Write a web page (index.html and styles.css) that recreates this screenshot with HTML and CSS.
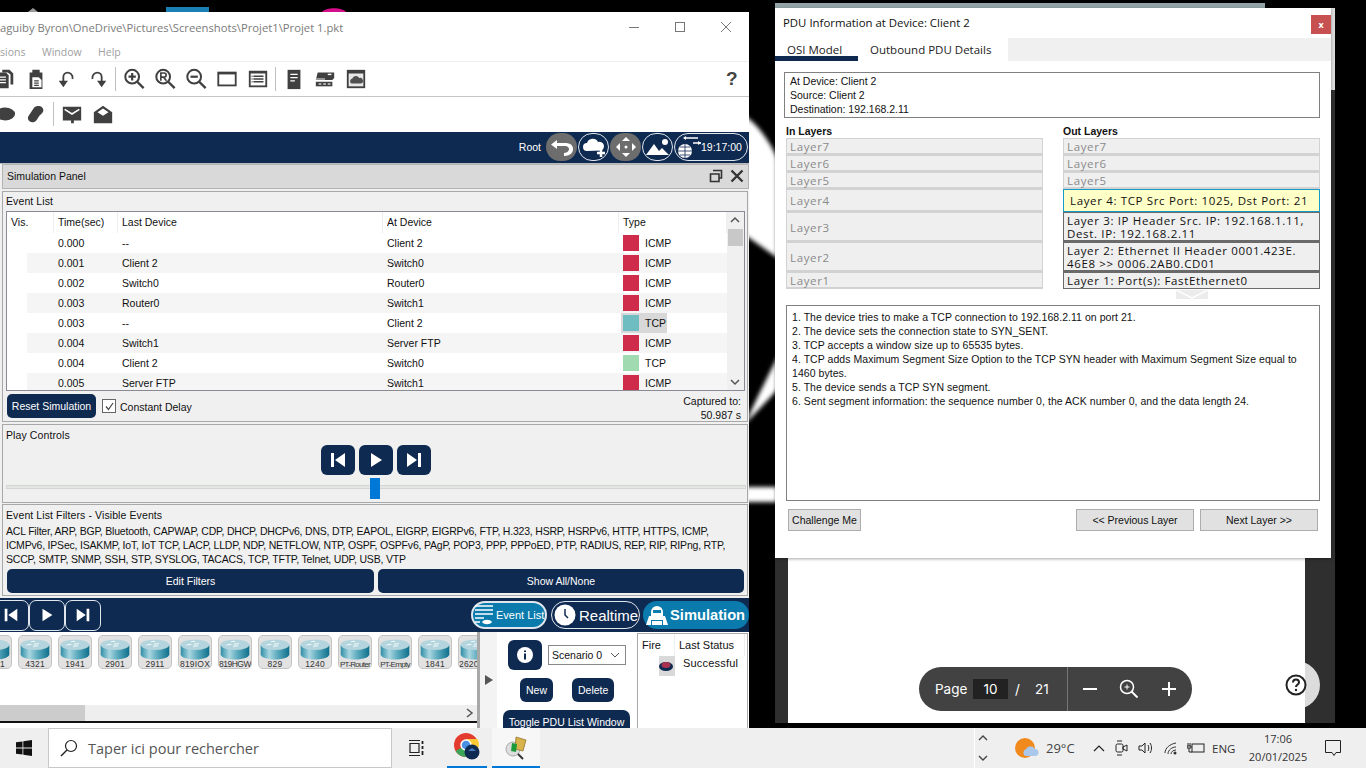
FILE: index.html
```html
<!DOCTYPE html>
<html lang="en">
<head>
<meta charset="utf-8">
<title>Packet Tracer - PDU Information</title>
<link rel="stylesheet" href="styles.css">
</head>
<body>
<svg class="defs" width="0" height="0" aria-hidden="true">
  <defs>
    <linearGradient id="rtSide" x1="0" x2="1" y1="0" y2="0">
      <stop offset="0" stop-color="#2f8ea6"/><stop offset=".3" stop-color="#a9d6e0"/><stop offset=".6" stop-color="#5ba9bd"/><stop offset="1" stop-color="#0f6f8c"/>
    </linearGradient>
    <filter id="soft"><feGaussianBlur stdDeviation="2.2"/></filter>
    <symbol id="router" viewBox="0 0 30 22">
      <path d="M0 6v10c0 3 6 5.500 15 5.500S30 19 30 16V6z" fill="url(#rtSide)"/>
      <ellipse cx="15" cy="6" rx="15" ry="5.500" fill="#b5d5de"/>
      <path d="M6 6.500c2-1.500 3 0 5-1M19 4.500c-2 1.500-3 0-5 1M13 8c2-1.500 3 0 5-1M11 3c2-1 2 0 4-.5" stroke="#fff" stroke-width="1" fill="none"/>
    </symbol>
    <symbol id="i-copy" viewBox="0 0 24 24"><path d="M3 5h10l3 3v14H3z" fill="#404040"/><path d="M6 10h7M6 13h7M6 16h7" stroke="#fff" stroke-width="1.500"/><path d="M9 2h8l4 4v12h-3V7l-3-2H9z" fill="#404040"/></symbol>
    <symbol id="i-paste" viewBox="0 0 24 24"><path d="M5 5h3V2h8v3h3v18H5z" fill="#404040"/><path d="M8 10h7l3 3v8H8z" fill="#fff"/><path d="M10 14h5M10 16.500h5M10 19h5" stroke="#404040" stroke-width="1.200"/></symbol>
    <symbol id="i-undo" viewBox="0 0 24 24"><path d="M18 12c1-5-3-7-5.500-7S8 7 8 10v6" fill="none" stroke="#404040" stroke-width="2"/><path d="M3 14h10l-5 7z" fill="#404040"/></symbol>
    <symbol id="i-redo" viewBox="0 0 24 24"><path d="M6 12C5 7 9 5 11.500 5S16 7 16 10v6" fill="none" stroke="#404040" stroke-width="2"/><path d="M11 14h10l-5 7z" fill="#404040"/></symbol>
    <symbol id="i-zin" viewBox="0 0 24 24"><circle cx="10" cy="9.500" r="7.500" fill="none" stroke="#404040" stroke-width="2.200"/><path d="M15.500 15l7 7" stroke="#404040" stroke-width="2.600"/><path d="M6 9.500h8M10 5.500v8" stroke="#404040" stroke-width="2.400"/></symbol>
    <symbol id="i-zre" viewBox="0 0 24 24"><circle cx="10" cy="9.500" r="7.500" fill="none" stroke="#404040" stroke-width="2.200"/><path d="M15.500 15l7 7" stroke="#404040" stroke-width="2.600"/><path d="M7.500 14V5.500h3.500a2 2 0 0 1 0 4.500H8M10.500 10l3 4" fill="none" stroke="#404040" stroke-width="1.800"/></symbol>
    <symbol id="i-zout" viewBox="0 0 24 24"><circle cx="10" cy="9.500" r="7.500" fill="none" stroke="#404040" stroke-width="2.200"/><path d="M15.500 15l7 7" stroke="#404040" stroke-width="2.600"/><path d="M6 9.500h8" stroke="#404040" stroke-width="2.400"/></symbol>
    <symbol id="i-win" viewBox="0 0 24 24"><rect x="2.500" y="5" width="19" height="14" fill="none" stroke="#404040" stroke-width="2"/><path d="M2 6h20" stroke="#404040" stroke-width="2"/></symbol>
    <symbol id="i-list" viewBox="0 0 24 24"><rect x="2" y="3" width="20" height="18" fill="#404040"/><rect x="4" y="6" width="16" height="13" fill="#fff"/><path d="M7 9h11M7 12h11M7 15h11" stroke="#404040" stroke-width="1.800"/><path d="M5 9h1M5 12h1M5 15h1" stroke="#404040" stroke-width="1.800"/></symbol>
    <symbol id="i-srv" viewBox="0 0 24 24"><rect x="5" y="2" width="14" height="21" fill="#404040"/><path d="M8 7h8M8 10.500h8M8 14h5" stroke="#fff" stroke-width="1.300"/></symbol>
    <symbol id="i-dev" viewBox="0 0 24 24"><path d="M4 5h18v6l-2 2H2z" fill="#404040"/><path d="M15 7h4" stroke="#fff" stroke-width="1.500"/><path d="M2 15h18v5H2z" fill="#404040"/><path d="M5 17.500h3M10 17.500h3M15 17.500h3" stroke="#ccc" stroke-width="1.500"/><path d="M2 12h10" stroke="#fff" stroke-width="1"/></symbol>
    <symbol id="i-cloud" viewBox="0 0 24 24"><rect x="2" y="2" width="20" height="20" fill="#404040"/><rect x="4" y="6" width="16" height="14" fill="#e8e8e8"/><path d="M7 17a3 3 0 0 1 1-5.500 4 4 0 0 1 7.500-.500 3 3 0 0 1 2 6z" fill="#505050"/></symbol>
    <symbol id="i-mail" viewBox="0 0 24 24"><path d="M2 4h20v15h-8v3h-3v-3H2z" fill="#404040"/><path d="M4 7l8 5 8-5" fill="none" stroke="#fff" stroke-width="1.800"/></symbol>
    <symbol id="i-mailo" viewBox="0 0 24 24"><path d="M2 10l10-7 10 7v12H2z" fill="#404040"/><path d="M6 10l6-4 6 4-6 4z" fill="#fff"/></symbol>
    <symbol id="i-first" viewBox="0 0 20 20"><path d="M3 3h3v14H3zM17 3v14L7 10z" fill="#fff"/></symbol>
    <symbol id="i-play" viewBox="0 0 20 20"><path d="M5 3l11 7-11 7z" fill="#fff"/></symbol>
    <symbol id="i-last" viewBox="0 0 20 20"><path d="M14 3h3v14h-3zM3 3v14l10-7z" fill="#fff"/></symbol>
  </defs>
</svg>

<main class="desk">
  <svg class="backdrop" viewBox="0 0 1366 728" width="1366" height="728" aria-hidden="true">
    <g fill="#fff" filter="url(#soft)">
      <path d="M745 116c12 8 24 24 34 45v98l-34-24z"/>
      <path d="M745 424c10-22 22-46 34-70v34l-34 36z"/>
      <rect x="745" y="487" width="34" height="15"/>
    </g>
    <rect x="166" y="7" width="43" height="6" fill="#1a7fb5"/>
    <path d="M322 12c4-5 20-5 24 0z" fill="#d60e8c"/>
    <path d="M28 12l5-4 5 4z" fill="#999"/>
    <rect x="775" y="3" width="490" height="6" fill="#94a3a8"/>
    <rect x="775" y="558" width="560" height="165" fill="#2f2f2f"/>
    <rect x="788" y="558" width="517" height="165" fill="#fff"/>
    <rect x="1331" y="90" width="4" height="470" fill="#2f2f2f"/>
    <rect x="1331" y="8" width="4" height="82" fill="#dcdcdc"/>
    <circle cx="1296" cy="685" r="24" fill="#dcdcdc"/>
    <rect x="1272" y="655" width="33" height="60" fill="#fff"/>
  </svg>

  <section class="pt-window">
    <header class="pt-title">
      <div class="title-row">
        <span class="title-text">aguiby Byron\OneDrive\Pictures\Screenshots\Projet1\Projet 1.pkt</span>
        <span class="win-ctrl">
          <svg width="12" height="12" viewBox="0 0 12 12"><path d="M1 6.500h10" stroke="#777" fill="none"/></svg>
          <svg width="12" height="12" viewBox="0 0 12 12"><rect x="1.500" y="1.500" width="9" height="9" stroke="#777" fill="none"/></svg>
          <svg width="12" height="12" viewBox="0 0 12 12"><path d="M1 1l10 10M11 1L1 11" stroke="#777" fill="none"/></svg>
        </span>
      </div>
      <nav class="menu"><span class="menu-a">sions</span><span class="menu-b">Window</span><span>Help</span></nav>
    </header>
    <div class="tool tool-one">
      <svg class="ico"><use href="#i-copy"/></svg><svg class="ico"><use href="#i-paste"/></svg>
      <svg class="ico"><use href="#i-undo"/></svg><svg class="ico"><use href="#i-redo"/></svg>
      <i class="sep"></i>
      <svg class="ico"><use href="#i-zin"/></svg><svg class="ico"><use href="#i-zre"/></svg><svg class="ico"><use href="#i-zout"/></svg>
      <svg class="ico"><use href="#i-win"/></svg><svg class="ico"><use href="#i-list"/></svg>
      <i class="sep"></i>
      <svg class="ico"><use href="#i-srv"/></svg><svg class="ico"><use href="#i-dev"/></svg><svg class="ico"><use href="#i-cloud"/></svg>
      <span class="help-q">?</span>
    </div>
    <div class="tool tool-two">
      <svg class="ico" viewBox="0 0 24 24"><ellipse cx="12" cy="12" rx="11" ry="7" fill="#404040"/></svg>
      <svg class="ico" viewBox="0 0 24 24"><path d="M8 21c-4 0-6-4-4-7l6-9c3-3 10-2 10 3 0 3-3 4-5 7s-3 6-7 6z" fill="#404040"/></svg>
      <i class="sep"></i>
      <svg class="ico"><use href="#i-mail"/></svg><svg class="ico"><use href="#i-mailo"/></svg>
    </div>
    <div class="navy-strip">
      <span class="root">Root</span>
      <span class="rnd rnd-grey"><svg width="24" height="20" viewBox="0 0 24 20"><path d="M7 3L1 7.500 7 12V9h8c3 0 4 2 4 3s-1 4-5 4v3c6 0 9-3 9-7s-3-6-8-6H7z" fill="#fff"/></svg></span>
      <span class="rnd rnd-line"><svg width="26" height="22" viewBox="0 0 26 22"><path d="M6 15a4 4 0 0 1 0-8 6 6 0 0 1 11-1 4.500 4.500 0 0 1 3 8.500z" fill="#fff"/><path d="M20 13v8M16 17h8" stroke="#fff" stroke-width="2.500"/></svg></span>
      <span class="rnd rnd-grey"><svg width="22" height="22" viewBox="0 0 22 22"><path d="M11 1l4 4H7zM11 21l-4-4h8zM1 11l4-4v8zM21 11l-4 4V7z" fill="#fff"/><circle cx="11" cy="11" r="1.500" fill="#fff"/></svg></span>
      <span class="rnd rnd-line"><svg width="26" height="22" viewBox="0 0 26 22"><path d="M1 19l8-11 5 7 3-3 7 7z" fill="#fff"/><circle cx="20" cy="6" r="3" fill="#fff"/></svg></span>
      <span class="rnd rnd-line rnd-time"><svg width="24" height="24" viewBox="0 0 24 24"><circle cx="8" cy="16" r="7" fill="#fff"/><path d="M1 16h14M8 9v14M3 12h10M3 20h10" stroke="#0f2a50" stroke-width=".8"/><path d="M9 3h12M16 8h8" stroke="#fff" stroke-width="1.500"/><path d="M9 1L6 3l3 2zM21 6l3 2-3 2z" fill="#fff"/></svg>19:17:00</span>
    </div>

    <div class="sim">
      <div class="sim-head">
        <span>Simulation Panel</span>
        <span class="sim-head-ico">
          <svg width="14" height="14" viewBox="0 0 14 14"><path d="M4 1.500h8.500V9H10M1.500 5H10v7.500H1.500z" fill="none" stroke="#333" stroke-width="1.600"/></svg>
          <svg width="14" height="14" viewBox="0 0 14 14"><path d="M1.500 1.500l11 11M12.500 1.500l-11 11" stroke="#333" stroke-width="2.400"/></svg>
        </span>
      </div>

      <div class="group group-events">
        <div class="group-title">Event List</div>
        <div class="table">
          <div class="rows">
            <div class="thead">
              <span>Vis.</span><span>Time(sec)</span><span>Last Device</span><span>At Device</span><span>Type</span>
            </div>
            <div class="tr"><span></span><span>0.000</span><span>--</span><span>Client 2</span><span class="type"><i class="sw red"></i>ICMP</span></div>
            <div class="tr alt"><span></span><span>0.001</span><span>Client 2</span><span>Switch0</span><span class="type"><i class="sw red"></i>ICMP</span></div>
            <div class="tr"><span></span><span>0.002</span><span>Switch0</span><span>Router0</span><span class="type"><i class="sw red"></i>ICMP</span></div>
            <div class="tr alt"><span></span><span>0.003</span><span>Router0</span><span>Switch1</span><span class="type"><i class="sw red"></i>ICMP</span></div>
            <div class="tr"><span></span><span>0.003</span><span>--</span><span>Client 2</span><span class="type type-sel"><i class="sw teal"></i>TCP</span></div>
            <div class="tr alt"><span></span><span>0.004</span><span>Switch1</span><span>Server FTP</span><span class="type"><i class="sw red"></i>ICMP</span></div>
            <div class="tr"><span></span><span>0.004</span><span>Client 2</span><span>Switch0</span><span class="type"><i class="sw green"></i>TCP</span></div>
            <div class="tr alt"><span></span><span>0.005</span><span>Server FTP</span><span>Switch1</span><span class="type"><i class="sw red"></i>ICMP</span></div>
          </div>
          <div class="vbar">
            <svg width="16" height="16" viewBox="0 0 16 16"><path d="M4 10l4-4 4 4" fill="none" stroke="#555" stroke-width="1.500"/></svg>
            <i class="vthumb"></i>
            <svg width="16" height="16" viewBox="0 0 16 16"><path d="M4 6l4 4 4-4" fill="none" stroke="#555" stroke-width="1.500"/></svg>
          </div>
        </div>
        <div class="ev-foot">
          <button class="btn reset">Reset Simulation</button>
          <span class="check"><svg width="13" height="13" viewBox="0 0 13 13"><path d="M3 6.500l2.500 3L10 3" fill="none" stroke="#444" stroke-width="1.200"/></svg></span>
          <span class="delay">Constant Delay</span>
          <span class="captured">Captured to:<br>50.987 s</span>
        </div>
      </div>

      <div class="group group-play">
        <div class="group-title">Play Controls</div>
        <div class="play-btns">
          <button class="btn play"><svg width="20" height="20"><use href="#i-first"/></svg></button>
          <button class="btn play"><svg width="20" height="20"><use href="#i-play"/></svg></button>
          <button class="btn play"><svg width="20" height="20"><use href="#i-last"/></svg></button>
        </div>
        <div class="slider"></div>
        <i class="thumb"></i>
      </div>

      <div class="group group-filter">
        <div class="group-title">Event List Filters - Visible Events</div>
        <p class="filters">ACL Filter, ARP, BGP, Bluetooth, CAPWAP, CDP, DHCP, DHCPv6, DNS, DTP, EAPOL, EIGRP, EIGRPv6, FTP, H.323, HSRP, HSRPv6, HTTP, HTTPS, ICMP,<br>ICMPv6, IPSec, ISAKMP, IoT, IoT TCP, LACP, LLDP, NDP, NETFLOW, NTP, OSPF, OSPFv6, PAgP, POP3, PPP, PPPoED, PTP, RADIUS, REP, RIP, RIPng, RTP,<br>SCCP, SMTP, SNMP, SSH, STP, SYSLOG, TACACS, TCP, TFTP, Telnet, UDP, USB, VTP</p>
        <div class="filter-btns">
          <button class="btn wide">Edit Filters</button>
          <button class="btn wide">Show All/None</button>
        </div>
      </div>
    </div>

    <div class="navy-bar">
      <div class="nav-btns">
        <button class="nav"><svg width="18" height="18"><use href="#i-first"/></svg></button>
        <button class="nav"><svg width="18" height="18"><use href="#i-play"/></svg></button>
        <button class="nav"><svg width="18" height="18"><use href="#i-last"/></svg></button>
      </div>
      <div class="modes">
        <span class="mode mode-ev"><svg width="20" height="22" viewBox="0 0 20 22"><path d="M1 2h18M1 6h18M1 10h18M1 14h9M1 18h5" stroke="#fff" stroke-width="1.500"/><path d="M8 18c2-3 8-3 10 0-2 3-8 3-10 0z" fill="#fff"/></svg>Event List</span>
        <span class="mode mode-rt"><svg width="22" height="22" viewBox="0 0 22 22"><circle cx="11" cy="11" r="10.500" fill="#fff"/><path d="M11 5v6l3 3" fill="none" stroke="#0f2a50" stroke-width="1.500"/></svg>Realtime</span>
        <span class="mode mode-sim"><svg width="24" height="24" viewBox="0 0 24 24"><path d="M6 9a6 6 0 0 1 12 0v8H6z" fill="#fff"/><rect x="8" y="7" width="8" height="3" fill="#0a7bac"/><path d="M1 22l3-9h2v9zM23 22l-3-9h-2v9zM7 18h10v4H7z" fill="#fff"/></svg>Simulation</span>
      </div>
    </div>

    <div class="lower">
      <div class="devices">
        <div class="tiles">
          <figure class="tile"><svg class="rt"><use href="#router"/></svg><figcaption>4331</figcaption></figure>
          <figure class="tile"><svg class="rt"><use href="#router"/></svg><figcaption>4321</figcaption></figure>
          <figure class="tile"><svg class="rt"><use href="#router"/></svg><figcaption>1941</figcaption></figure>
          <figure class="tile"><svg class="rt"><use href="#router"/></svg><figcaption>2901</figcaption></figure>
          <figure class="tile"><svg class="rt"><use href="#router"/></svg><figcaption>2911</figcaption></figure>
          <figure class="tile"><svg class="rt"><use href="#router"/></svg><figcaption>819IOX</figcaption></figure>
          <figure class="tile"><svg class="rt"><use href="#router"/></svg><figcaption class="tight">819HGW</figcaption></figure>
          <figure class="tile"><svg class="rt"><use href="#router"/></svg><figcaption>829</figcaption></figure>
          <figure class="tile"><svg class="rt"><use href="#router"/></svg><figcaption>1240</figcaption></figure>
          <figure class="tile"><svg class="rt"><use href="#router"/></svg><figcaption class="tighter">PT-Router</figcaption></figure>
          <figure class="tile"><svg class="rt"><use href="#router"/></svg><figcaption class="tighter">PT-Empty</figcaption></figure>
          <figure class="tile"><svg class="rt"><use href="#router"/></svg><figcaption>1841</figcaption></figure>
          <figure class="tile"><svg class="rt"><use href="#router"/></svg><figcaption>2620XM</figcaption></figure>
        </div>
        <div class="hbar"><i class="hthumb"></i><svg width="10" height="12" viewBox="0 0 10 12"><path d="M2 2l5 4-5 4" fill="none" stroke="#555" stroke-width="1.500"/></svg></div>
      </div>
      <div class="grip"><svg width="8" height="10" viewBox="0 0 8 10"><path d="M0 0l8 5-8 5z" fill="#555"/></svg></div>
      <div class="scenario">
        <div class="sc-row">
          <button class="btn info"><svg width="18" height="18" viewBox="0 0 18 18"><circle cx="9" cy="9" r="8" fill="#fff"/><path d="M9 7.500v6M9 4.500v1.500" stroke="#0f2a50" stroke-width="2"/></svg></button>
          <span class="select">Scenario 0<svg width="10" height="6" viewBox="0 0 10 6"><path d="M1 1l4 4 4-4" fill="none" stroke="#555"/></svg></span>
        </div>
        <div class="sc-btns"><button class="btn small">New</button><button class="btn small">Delete</button></div>
        <button class="btn toggle">Toggle PDU List Window</button>
      </div>
      <div class="fire">
        <div class="fire-head"><span>Fire</span><span>Last Status</span></div>
        <div class="fire-row">
          <span class="fire-dot"><svg width="14" height="10" viewBox="0 0 14 10"><ellipse cx="7" cy="5.500" rx="7" ry="4.500" fill="#0f2a50"/><ellipse cx="7" cy="4" rx="4.500" ry="3" fill="#a8324f"/></svg></span>
          <span>Successful</span>
        </div>
      </div>
    </div>
  </section>

  <section class="pdu">
    <header class="pdu-title"><span>PDU Information at Device: Client 2</span><button class="close">x</button></header>
    <div class="tabs"><span class="tab tab-on">OSI Model</span><span class="tab tab-off">Outbound PDU Details</span><span class="tab-fill"></span></div>
    <div class="pdu-body">
      <div class="at-box">At Device: Client 2<br>Source: Client 2<br>Destination: 192.168.2.11</div>
      <div class="cols">
        <div class="col">
          <h2>In Layers</h2>
          <div class="ly h17">Layer7</div><div class="ly h17">Layer6</div><div class="ly h17">Layer5</div>
          <div class="ly h23">Layer4</div><div class="ly h30">Layer3</div><div class="ly h30">Layer2</div><div class="ly h17">Layer1</div>
        </div>
        <div class="col">
          <h2>Out Layers</h2>
          <div class="ly h17">Layer7</div><div class="ly h17">Layer6</div><div class="ly h17">Layer5</div>
          <div class="ly h23 ly-sel">Layer 4: TCP Src Port: 1025, Dst Port: 21</div>
          <div class="ly h30 ly-on">Layer 3: IP Header Src. IP: 192.168.1.11,<br>Dest. IP: 192.168.2.11</div>
          <div class="ly h30 ly-on">Layer 2: Ethernet II Header 0001.423E.<br>46E8 &gt;&gt; 0006.2AB0.CD01</div>
          <div class="ly h17 ly-on ly-last">Layer 1: Port(s): FastEthernet0</div>
          <svg class="down" width="32" height="9" viewBox="0 0 32 9"><rect width="32" height="9" fill="#ececec"/><path d="M0 0l16 8 16-8" fill="none" stroke="#fff" stroke-width="1.500"/></svg>
        </div>
      </div>
      <div class="desc">1. The device tries to make a TCP connection to 192.168.2.11 on port 21.<br>2. The device sets the connection state to SYN_SENT.<br>3. TCP accepts a window size up to 65535 bytes.<br>4. TCP adds Maximum Segment Size Option to the TCP SYN header with Maximum Segment Size equal to<br>1460 bytes.<br>5. The device sends a TCP SYN segment.<br>6. Sent segment information: the sequence number 0, the ACK number 0, and the data length 24.</div>
      <div class="pdu-foot">
        <button class="gbtn">Challenge Me</button>
        <span class="foot-right"><button class="gbtn gwide">&lt;&lt; Previous Layer</button><button class="gbtn gwide">Next Layer &gt;&gt;</button></span>
      </div>
    </div>
  </section>

  <div class="pager">
    <span class="pg-label">Page</span><span class="pg-num">10</span><span class="pg-slash">/</span><span class="pg-total">21</span>
    <i class="pg-sep"></i>
    <svg width="16" height="16" viewBox="0 0 16 16"><path d="M1 8h14" stroke="#fff" stroke-width="2"/></svg>
    <svg width="20" height="20" viewBox="0 0 20 20"><circle cx="8" cy="8" r="6.500" fill="none" stroke="#fff" stroke-width="1.500"/><path d="M12.500 12.500l6 6" stroke="#fff" stroke-width="2"/><path d="M5.500 8h5M8 5.500v5" stroke="#fff"/></svg>
    <svg width="16" height="16" viewBox="0 0 16 16"><path d="M1 8h14M8 1v14" stroke="#fff" stroke-width="2"/></svg>
  </div>
  <svg class="pdf-help" width="22" height="22" viewBox="0 0 22 22"><circle cx="11" cy="11" r="9.500" fill="#fff" stroke="#222" stroke-width="2"/><path d="M8 8.500c0-4 6-4 6 0 0 2-3 2-3 4.500" fill="none" stroke="#222" stroke-width="2"/><circle cx="11" cy="16" r="1.200" fill="#222"/></svg>
</main>

<footer class="taskbar">
  <svg class="tb-start" width="16" height="16" viewBox="0 0 16 16"><path d="M0 2.300l6.500-.9v6.200H0zM7.300 1.300L16 0v7.600H7.300zM0 8.400h6.500v6.200L0 13.700zM7.300 8.400H16V16l-8.700-1.200z" fill="#111"/></svg>
  <div class="tb-search">
    <svg width="18" height="18" viewBox="0 0 18 18"><circle cx="11" cy="7" r="5.500" fill="none" stroke="#222" stroke-width="1.200"/><path d="M7 11l-6 6" stroke="#222" stroke-width="1.500"/></svg>
    <span>Taper ici pour rechercher</span>
  </div>
  <span class="tb-task"><svg width="16" height="16" viewBox="0 0 16 16"><path d="M1 .5h11M1 15.500h11M2 3.500h9v9H2z" fill="none" stroke="#222" stroke-width="1.200"/><path d="M14.500 1v3M14.500 6v3M14.500 11v4" stroke="#222" stroke-width="1.800"/></svg></span>
  <span class="tb-app">
    <svg width="26" height="28" viewBox="0 0 26 28"><circle cx="12" cy="12" r="12" fill="#e33b2e"/><path d="M12 12L1.600 18A12 12 0 0 0 18 22.400z" fill="#3aa757"/><path d="M12 12l6 10.400A12 12 0 0 0 23.500 6H12z" fill="#fcc934"/><circle cx="12" cy="12" r="5" fill="#4a90e2" stroke="#fff" stroke-width="1.500"/><circle cx="18" cy="19" r="7.500" fill="#0f2a50"/><path d="M14 18l4-3 4 3z" fill="#4a7cc0"/></svg>
  </span>
  <span class="tb-app tb-app-on">
    <svg width="26" height="26" viewBox="0 0 26 26"><circle cx="10" cy="15" r="7" fill="#ddd" stroke="#aaa"/><path d="M13 3l10 3-3 11-8-2z" fill="#d8b24a" stroke="#8a6a20" stroke-width=".7"/><path d="M9 9l5 1-1 8-5-1z" fill="#1c9a3a"/><path d="M15 20l5 5" stroke="#333" stroke-width="2"/></svg>
  </span>
  <span class="tb-fill"></span>
  <span class="tb-scroll">
    <svg width="10" height="6" viewBox="0 0 10 6"><path d="M1 5l4-4 4 4" fill="none" stroke="#444" stroke-width="1.400"/></svg>
    <svg width="10" height="6" viewBox="0 0 10 6"><path d="M1 1l4 4 4-4" fill="none" stroke="#444" stroke-width="1.400"/></svg>
  </span>
  <svg class="tb-wx" width="24" height="22" viewBox="0 0 24 22"><circle cx="10" cy="11" r="10" fill="#f08a1d"/><path d="M10 19a4 4 0 0 1 1-7 5 5 0 0 1 9 0 3.500 3.500 0 0 1 0 7z" fill="#a9c8ec"/></svg>
  <span class="tb-temp">29°C</span>
  <span class="tray">
    <svg width="12" height="7" viewBox="0 0 12 7"><path d="M1 6l5-5 5 5" fill="none" stroke="#222" stroke-width="1.200"/></svg>
    <svg width="14" height="16" viewBox="0 0 14 16"><rect x="1" y="4" width="7" height="8" rx="1.500" fill="none" stroke="#222"/><path d="M8 7l4-2v6l-4-2zM2 1h5M2 15h5" fill="none" stroke="#222"/></svg>
    <svg width="16" height="14" viewBox="0 0 16 14"><path d="M1 5h3l3-3v10L4 9H1zM10 4c1 2 1 4 0 6M12 2c2 3 2 7 0 10" fill="none" stroke="#222"/></svg>
    <svg width="14" height="14" viewBox="0 0 14 14"><path d="M1 12C1 7 6 3 12 2M4 13c0-4 4-7 8-7M7 13c0-2 2-4 5-4" fill="none" stroke="#333"/><circle cx="11" cy="12" r="1.500" fill="#333"/></svg>
    <svg width="18" height="12" viewBox="0 0 18 12"><rect x="5" y="2" width="12" height="8" fill="none" stroke="#222"/><path d="M3 1v3M1 1v3M0 4h4v2H0zM2 6v4h3" fill="none" stroke="#222"/></svg>
  </span>
  <span class="tb-lang">ENG</span>
  <span class="tb-clock">17:06<br>20/01/2025</span>
  <svg class="tb-note" width="16" height="16" viewBox="0 0 16 16"><path d="M.5.500h15v12H11L9 15.500l-2-3H.5z" fill="none" stroke="#222"/></svg>
</footer>
</body>
</html>
```

FILE: styles.css
```css
* { box-sizing: border-box; }
html, body { margin: 0; padding: 0; }
body { width: 1366px; height: 768px; overflow: hidden; background: #000; font-family: "Liberation Sans", Arial, sans-serif; font-size: 10.5px; color: #111; }
.defs { position: absolute; }
button { font-family: inherit; cursor: default; }
p, h2, figure { margin: 0; }
svg { display: block; flex: none; }

.desk { position: relative; width: 1366px; height: 728px; overflow: hidden; background: #000; }
.backdrop { position: absolute; left: 0; top: 0; }

/* Packet Tracer window */
.pt-window { position: absolute; left: 0; top: 12px; width: 749px; height: 716px; background: #fff; overflow: hidden; display: flex; flex-direction: column; }
.pt-title { height: 50px; border-bottom: 1px solid #eee; flex: none; }
.title-row { height: 30px; display: flex; align-items: center; justify-content: space-between; }
.title-text { font-family: "Open Sans", sans-serif; font-size: 11.25px; color: #7b7b7b; white-space: nowrap; }
.win-ctrl { display: flex; gap: 34px; padding-right: 17px; }
.menu { display: flex; height: 20px; align-items: center; font-family: "Open Sans", sans-serif; font-size: 10.5px; color: #a0a0a0; }
.menu-a { width: 42px; }
.menu-b { width: 56px; }
.tool { display: flex; align-items: center; height: 35px; flex: none; margin-left: -11px; }
.tool-one { border-bottom: 1px solid #c4c4c4; padding-bottom: 1px; }
.tool-two { height: 35px; padding-bottom: 2px; }
.ico { width: 22px; height: 22px; margin: 0 4.500px; }
.sep { width: 1px; height: 24px; background: #c0c0c0; margin: 0 2px; }
.help-q { margin-left: auto; width: 23px; font-weight: bold; font-size: 19px; color: #444; }
.navy-strip { height: 31px; background: #0f2a50; display: flex; align-items: center; justify-content: flex-end; flex: none; gap: 1px; padding: 0 1px 1px 0; color: #fff; font-size: 10.5px; }
.root { margin-right: 4px; }
.rnd { width: 31px; height: 28px; border-radius: 14px; display: flex; align-items: center; justify-content: center; }
.rnd-grey { background: #6d6d6d; }
.rnd-line { border: 1px solid #dfe6ee; }
.rnd-time { width: 74px; justify-content: flex-start; gap: 0; font-size: 10.5px; padding-left: 2px; }

.sim { height: 435px; background: #f0f0f0; padding-left: 2px; border-top: 1px solid #bbb; flex: none; display: flex; flex-direction: column; }
.sim-head { height: 25px; background: #d9d9d9; border: 1px solid #b4b4b4; display: flex; align-items: center; justify-content: space-between; padding: 0 4px 2px; flex: none; font-size: 10.5px; }
.sim-head-ico { display: flex; gap: 7px; }
.group { position: relative; width: 746px; border: 1px solid #a8a8a8; flex: none; display: flex; flex-direction: column; }
.group-events { height: 231px; margin-top: 2px; }
.group-play { height: 79px; margin-top: 2px; }
.group-filter { height: 92px; margin-top: 1px; }
.group-title { height: 19px; line-height: 19px; padding-left: 3px; flex: none; letter-spacing: .1px; }
.group-play .group-title, .group-filter .group-title { line-height: 21px; }

.table { margin-left: 3px; width: 739px; height: 180px; border: 1px solid #8a8a96; background: #fff; display: flex; flex: none; overflow: hidden; }
.rows { width: 720px; flex: none; }
.thead, .tr { display: grid; grid-template-columns: 47px 64px 265px 236px 108px; height: 20px; align-items: center; }
.thead { height: 21px; }
.thead span { height: 21px; line-height: 21px; padding-left: 4px; border-right: 1px solid #eee; }
.tr span { padding-left: 4px; }
.tr span:first-child { padding: 0; }
.tr.alt { background: linear-gradient(to right, #fff 20px, #f5f5f5 20px); }
.type { display: flex; align-items: center; height: 20px; }
.tr .type { padding-left: 4px; }
.type-sel { background: linear-gradient(to right, #d8d8d8 0, #d8d8d8 46px, transparent 46px); margin-left: 2px; padding-left: 2px !important; }
.sw { width: 16px; height: 16px; margin-right: 6px; flex: none; }
.red { background: #cf2c4b; }
.teal { background: #6fbcc1; }
.green { background: #9fdab1; }
.vbar { flex: 1; background: #f0f0f0; display: flex; flex-direction: column; justify-content: space-between; position: relative; }
.vthumb { position: absolute; left: 1px; top: 17px; width: 15px; height: 17px; background: #c8c8c8; }
.ev-foot { flex: 1; display: flex; align-items: flex-start; padding: 3px 6px 0 4px; }
.btn { background: #0f2a50; color: #fff; border: 0; border-radius: 5px; font-size: 10.5px; padding: 0; }
.reset { width: 89px; height: 24px; }
.check { width: 14px; height: 14px; border: 1px solid #666; margin: 5px 4px 0 6px; background: #fff; }
.delay { margin-top: 6px; line-height: 14px; }
.captured { margin-left: auto; text-align: right; line-height: 14px; }
.play-btns { display: flex; justify-content: center; gap: 4px; padding-left: 2px; margin-top: 1px; }
.btn.play { width: 34px; height: 30px; border-radius: 6px; display: flex; align-items: center; justify-content: center; }
.slider { height: 4px; margin: 10px 1px 0 3px; background: #e4e6e4; border: 1px solid #d4d6d4; }
.thumb { position: absolute; left: 367px; top: 53px; width: 10px; height: 21px; background: #0078d7; }
.filters { padding-left: 3px; line-height: 14px; height: 42px; letter-spacing: -.2px; white-space: nowrap; }
.filter-btns { display: flex; gap: 4px; padding-left: 4px; margin-top: 3px; }
.btn.wide { width: 367px; height: 24px; }
.filter-btns .btn.wide + .btn.wide { width: 366px; }

.navy-bar { height: 34px; background: #0f2a50; display: flex; justify-content: space-between; align-items: center; flex: none; }
.nav-btns { display: flex; margin-left: -7px; gap: 0; }
.nav { width: 36px; height: 31px; background: transparent; border: 1px solid #dfe6ee; border-radius: 7px; display: flex; align-items: center; justify-content: center; padding: 0; }
.modes { display: flex; align-items: center; gap: 3px; }
.mode { height: 28px; border-radius: 14px; display: flex; align-items: center; color: #fff; border: 1px solid #dfe6ee; white-space: nowrap; }
.mode-ev { width: 76px; background: #0a7bac; font-size: 11px; gap: 2px; padding-left: 1px; border-width: 2px; }
.mode-rt { width: 89px; font-size: 15px; gap: 3px; padding-left: 2px; margin-left: 1px; }
.mode-sim { width: 106px; background: #0a7bac; font-size: 14.700px; font-weight: bold; gap: 1px; padding-left: 2px; border: 0; }

.lower { flex: 1; display: flex; background: #fff; min-height: 0; }
.devices { width: 477px; flex: none; display: flex; flex-direction: column; overflow: hidden; position: relative; }
.tiles { display: flex; gap: 6px; margin-left: -22px; padding-top: 3px; height: 73px; flex: none; }
.tile { width: 34px; height: 34px; flex: none; background: #e2e2e2; border: 1px solid #c4c4c4; border-radius: 5px; padding-top: 3px; overflow: hidden; }
.rt { width: 30px; height: 21px; margin: 0 auto; }
.tile figcaption { font-size: 8.500px; line-height: 9px; text-align: center; color: #333; letter-spacing: .2px; white-space: nowrap; }
.tile figcaption.tight { letter-spacing: -.5px; }
.tile figcaption.tighter { font-size: 8px; letter-spacing: -.7px; }
.hbar { height: 18px; background: #eee; border-bottom: 2px solid #111; display: flex; align-items: center; justify-content: flex-end; padding-right: 2px; position: relative; flex: none; }
.hthumb { position: absolute; left: 0; top: 0; width: 85px; height: 16px; background: #cccccc; }
.grip { width: 20px; flex: none; border-left: 3px solid #a8a8a8; background: #f3f3f3; display: flex; align-items: center; justify-content: center; }
.scenario { width: 140px; flex: none; background: #fff; padding: 8px 0 0 6px; overflow: hidden; }
.sc-row { display: flex; align-items: center; gap: 6px; padding-left: 5px; }
.btn.info { width: 34px; height: 30px; border-radius: 6px; display: flex; align-items: center; justify-content: center; }
.select { width: 78px; height: 20px; border: 1px solid #888; display: flex; align-items: center; justify-content: space-between; padding: 0 5px 0 3px; font-size: 10.5px; }
.sc-btns { display: flex; gap: 19px; padding-left: 17px; margin-top: 8px; }
.btn.small { height: 24px; padding: 0 6px; min-width: 33px; border-radius: 6px; }
.btn.toggle { width: 127px; height: 30px; margin-top: 8px; padding: 0 0 6px; border-radius: 7px 7px 0 0; }
.fire { width: 111px; flex: none; border: 1px solid #aaa; border-bottom: 0; margin-top: 1px; position: relative; font-size: 11px; }
.fire-head { display: flex; height: 22px; align-items: center; }
.fire-head span:first-child { width: 37px; padding-left: 4px; border-right: 1px solid #eee; height: 22px; line-height: 22px; }
.fire-head span:last-child { padding-left: 4px; width: 70px; border-right: 1px solid #eee; height: 22px; line-height: 22px; }
.fire-row { display: flex; align-items: flex-start; line-height: 15px; letter-spacing: .2px; }
.fire-dot { width: 16px; height: 20px; margin-left: 21px; margin-right: 8px; background: #d9d9d9; display: flex; align-items: center; }

/* PDU dialog */
.pdu { position: absolute; left: 775px; top: 8px; width: 556px; height: 550px; background: #fff; display: flex; flex-direction: column; box-shadow: 0 1px 3px rgba(0,0,0,.35); }
.pdu-title { height: 30px; display: flex; justify-content: space-between; padding: 7px 0 0 8px; font-family: "Open Sans", sans-serif; font-size: 11.400px; line-height: 16px; color: #111; flex: none; }
.close { width: 20px; height: 19px; background: #c75050; color: #fff; border: 0; font-size: 9px; font-weight: bold; padding: 0; }
.tabs { height: 23px; display: flex; font-family: "Open Sans", sans-serif; font-size: 11.500px; color: #222; flex: none; }
.tab { line-height: 23px; padding-left: 12px; white-space: nowrap; flex: none; }
.tab-on { width: 83px; border-bottom: 5px solid #0f2a50; }
.tab-off { width: 150px; }
.tab-fill { flex: 1; background: #f0f0f0; }
.pdu-body { padding: 11px 11px 0 9px; flex: 1; display: flex; flex-direction: column; }
.at-box { width: 536px; height: 46px; border: 1px solid #808080; padding: 1px 5px; line-height: 14px; flex: none; }
.cols { display: flex; gap: 20px; margin-left: 2px; margin-top: 6px; height: 181px; flex: none; }
.col { width: 257px; flex: none; position: relative; }
.col h2 { font-size: 10.500px; line-height: 14px; font-weight: bold; margin-bottom: 0; }
.ly { background: #efefef; border: 1px solid #d2d2d2; border-bottom-width: 2px; padding-left: 3px; font-family: "Open Sans", sans-serif; font-size: 11.500px; letter-spacing: .65px; color: #8a8a8a; display: flex; align-items: center; white-space: nowrap; line-height: 13px; }
.h17 { height: 17px; }
.h23 { height: 23px; }
.h30 { height: 30px; display: block; padding-top: 1px; }
.ly-on { color: #111; border-color: #6a6a6a; }
.ly-sel { color: #111; background: #ffffc8; border: 1px solid #169ac8; padding-left: 6px; }
.ly-last { border-bottom-width: 1px; }
.col > .h30:not(.ly-on) { display: flex; }
.down { margin: 1px auto 0; }
.desc { width: 534px; height: 196px; margin-left: 2px; border: 1px solid #808080; padding: 4px 5px; line-height: 14px; letter-spacing: .05px; flex: none; }
.pdu-foot { display: flex; justify-content: space-between; margin: 8px 2px 0 4px; }
.foot-right { display: flex; gap: 6px; }
.gbtn { height: 22px; background: #e1e1e1; border: 1px solid #adadad; font-size: 10.500px; color: #111; padding: 0; width: 73px; }
.gwide { width: 118px; }

.pager { position: absolute; left: 919px; top: 667px; width: 273px; height: 44px; background: #424242; border-radius: 22px; display: flex; align-items: center; color: #fff; font-family: "Inter", sans-serif; font-size: 13.500px; }
.pg-label { margin-left: 16px; width: 31px; }
.pg-num { width: 35px; height: 20px; background: #222; margin-left: 7px; text-align: center; line-height: 20px; }
.pg-slash { margin-left: 7px; width: 5px; }
.pg-total { margin-left: 15px; width: 15px; }
.pg-sep { width: 1px; height: 44px; background: #777; margin: 0 14px 0 17px; }
.pager svg:nth-of-type(2) { margin: 0 22px 0 21px; }
.pdf-help { position: absolute; left: 1285px; top: 674px; }

/* Taskbar */
.taskbar { height: 40px; background: #efefef; display: flex; align-items: center; position: relative; }
.tb-start { margin-left: 16px; }
.tb-search { width: 344px; height: 40px; margin-left: 16px; background: #fff; border: 1px solid #c8c8c8; display: flex; align-items: center; gap: 10px; padding-left: 11px; font-family: "Open Sans", sans-serif; font-size: 14.500px; color: #555; }
.tb-task { width: 16px; margin-left: 16px; }
.tb-app { width: 40px; height: 40px; margin-left: 23px; display: flex; align-items: center; justify-content: center; border-bottom: 2px solid #0078d7; }
.tb-app-on { width: 48px; margin-left: 5px; background: #f7f7f7; }
.tb-fill { flex: 1; }
.tb-scroll { width: 16px; display: flex; flex-direction: column; align-items: center; gap: 14px; border-left: 1px solid #fff; height: 40px; justify-content: center; margin-right: 25px; }
.tb-temp { font-family: "Open Sans", sans-serif; font-size: 13px; color: #444; margin-left: 7px; width: 33px; }
.tray { display: flex; align-items: center; gap: 9.500px; margin-left: 14px; }
.tb-lang { font-family: "Open Sans", sans-serif; font-size: 11.500px; color: #333; margin-left: 7px; width: 24px; white-space: nowrap; }
.tb-clock { font-family: "Open Sans", sans-serif; font-size: 11px; line-height: 18px; color: #333; text-align: center; width: 66px; margin-left: 9px; }
.tb-note { margin-left: 14px; margin-right: 25px; }
```
